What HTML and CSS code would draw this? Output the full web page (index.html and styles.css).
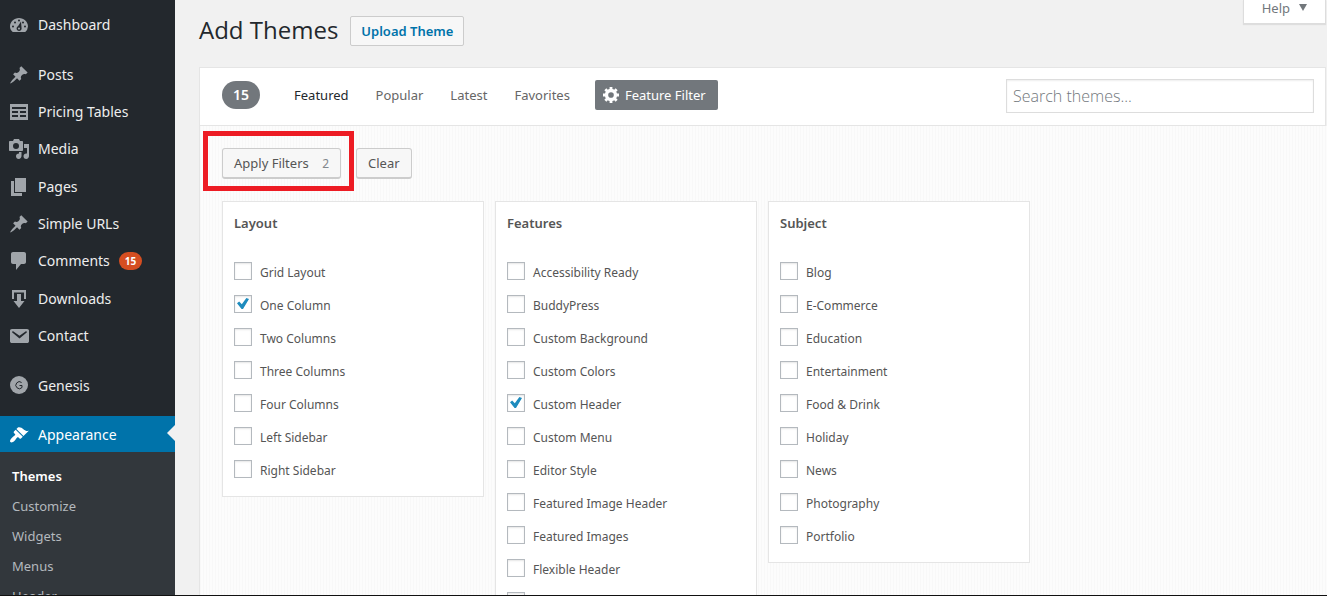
FILE: index.html
```html
<!DOCTYPE html>
<html lang="en">
<head>
<meta charset="utf-8">
<title>Add Themes</title>
<link rel="stylesheet" href="styles.css">
</head>
<body>
<div class="admin">
  <nav class="sidebar" aria-label="Main menu">
    <ul class="menu">
      <li><a class="menu-link" href="#"><svg class="icon" viewBox="0 0 20 20"><path fill-rule="evenodd" d="M3.76 17h12.48A7.95 7.95 0 0 0 19 11.500c0-4.700-4-8.500-9-8.500s-9 3.800-9 8.500c0 2.100.9 4 2.760 5.500zM9 5.500a1 1 0 1 1 2 0a1 1 0 1 1-2 0zM5 7.500a1 1 0 1 1 2 0a1 1 0 1 1-2 0zM3 11.500a1 1 0 1 1 2 0a1 1 0 1 1-2 0zM15 11.500a1 1 0 1 1 2 0a1 1 0 1 1-2 0zM13 7.500a1 1 0 1 1 2 0a1 1 0 1 1-2 0zM12 6.500l.6 7c0 1.400-1.100 2.500-2.500 2.500s-2.500-1.100-2.500-2.500c0-1 .6-1.800 1.400-2.200zM10 12.600a1 1 0 1 0 .01 0z"/></svg>Dashboard</a></li>
    </ul>
    <ul class="menu menu-main">
      <li><a class="menu-link" href="#"><svg class="icon" viewBox="0 0 20 20"><path d="M10.440 3.020l1.820-1.820 6.360 6.350-1.830 1.820c-1.050-.68-2.480-.57-3.410.36l-.75.75c-.92.93-1.040 2.350-.35 3.410l-1.830 1.820-2.410-2.410-2.800 2.790c-.42.42-3.380 2.710-3.800 2.290s1.860-3.390 2.280-3.810l2.790-2.790L4.100 9.360l1.830-1.820c1.050.69 2.480.57 3.400-.36l.75-.75c.93-.92 1.050-2.350.36-3.410z"/></svg>Posts</a></li>
      <li><a class="menu-link" href="#"><svg class="icon" viewBox="0 0 20 20"><path fill-rule="evenodd" d="M1 2h18v16H1zM3 5v2h14V5zM3 9v2h6V9zM11 9v2h6V9zM3 13v2h6v-2zM11 13v2h6v-2z"/></svg>Pricing Tables</a></li>
      <li><a class="menu-link" href="#"><svg class="icon" viewBox="0 0 20 20"><path fill-rule="evenodd" d="M14 10V3c0-.55-.45-1-1-1h-2l-1-2H5L4 2H1c-.55 0-1 .45-1 1v8c0 .55.45 1 1 1h12c.55 0 1-.45 1-1zM7 4a3 3 0 1 1 0 6a3 3 0 1 1 0-6zM15 5h5v12c0 1.500-1.100 3-2.800 3S14.500 18.800 14.500 17.200s1.200-2.700 2.700-2.700l.8.100V9h-3zM10 14.500V13h2.500v4c0 1.500-1.200 3-2.800 3S7 18.800 7 17.200s1.200-2.700 3-2.700z"/></svg>Media</a></li>
      <li><a class="menu-link" href="#"><svg class="icon" viewBox="0 0 20 20"><path d="M6 15V1h11v14zM5 16h8v3H2V4h3z"/></svg>Pages</a></li>
      <li><a class="menu-link" href="#"><svg class="icon" viewBox="0 0 20 20"><path d="M10.440 3.020l1.820-1.820 6.360 6.350-1.830 1.820c-1.050-.68-2.480-.57-3.410.36l-.75.75c-.92.93-1.040 2.350-.35 3.410l-1.830 1.820-2.410-2.410-2.800 2.790c-.42.42-3.380 2.710-3.800 2.290s1.860-3.390 2.280-3.810l2.790-2.790L4.100 9.360l1.830-1.820c1.050.69 2.480.57 3.400-.36l.75-.75c.93-.92 1.050-2.350.36-3.410z"/></svg>Simple URLs</a></li>
      <li><a class="menu-link" href="#"><svg class="icon" viewBox="0 0 20 20"><path d="M4 1h11c1.100 0 2 .9 2 2v8c0 1.100-.9 2-2 2h-3l-5 6v-6H4c-1.100 0-2-.9-2-2V3c0-1.100.9-2 2-2z"/></svg>Comments <span class="bubble">15</span></a></li>
      <li><a class="menu-link" href="#"><svg class="icon" viewBox="0 0 20 20"><path d="M15 3.500V10h2V1H3v9h2V3.500zM12 5v7h3.500L10 19l-5.500-7H8V5z"/></svg>Downloads</a></li>
      <li><a class="menu-link" href="#"><svg class="icon" viewBox="0 0 20 20"><path fill-rule="evenodd" d="M3 3h15c1.200 0 2 .7 2 1.800v10.400c0 1.100-.8 1.800-2 1.800H3c-1.200 0-2-.7-2-1.800V4.800C1 3.700 1.800 3 3 3zM10.500 12.500l7.200-6c.7-.7-.2-1.800-1.200-1.100l-6 4.300-6-4.300c-1-.7-1.900.4-1.200 1.100z"/></svg>Contact</a></li>
    </ul>
    <ul class="menu menu-theme">
      <li><a class="menu-link" href="#"><svg class="icon" viewBox="0 0 20 20"><circle cx="10" cy="9" r="9"/><path class="icon-line" d="M12.600 6.500A3.500 3.500 0 1 0 13 11.500V9.500H10.500"/></svg>Genesis</a></li>
    </ul>
    <a class="menu-link current" href="#"><svg class="icon" viewBox="0 0 20 20"><path d="M14.480 11.060L7.410 3.990l1.500-1.500c.5-.56 2.300-.47 3.510.32 1.210.8 1.430 1.280 2.910 2.100 1.180.64 2.450 1.260 4.450.85zm-.71.71L6.700 4.700 4.930 6.470c-.39.39-.39 1.020 0 1.410l1.060 1.060c.39.39.39 1.030 0 1.420-.6.6-1.430 1.110-2.210 1.690-.35.26-.7.53-1.010.84C1.430 14.230.4 16.080 1.400 17.070c.99 1 2.840-.03 4.180-1.360.31-.31.58-.66.85-1.020.57-.78 1.080-1.610 1.690-2.210.39-.39 1.020-.39 1.410 0l1.060 1.060c.39.39 1.020.39 1.410 0z"/></svg>Appearance</a>
    <ul class="submenu">
      <li><a class="active" href="#">Themes</a></li>
      <li><a href="#">Customize</a></li>
      <li><a href="#">Widgets</a></li>
      <li><a href="#">Menus</a></li>
      <li><a href="#">Header</a></li>
    </ul>
  </nav>

  <main class="content">
    <header class="page-head">
      <h1>Add Themes</h1>
      <button class="upload" type="button">Upload Theme</button>
      <button class="help" type="button">Help <svg class="caret" viewBox="0 0 8 7"><path d="M0 0h8L4 7z"/></svg></button>
    </header>

    <section class="browser">
      <div class="filter-bar">
        <span class="count">15</span>
        <div class="tabs">
          <a class="active" href="#">Featured</a>
          <a href="#">Popular</a>
          <a href="#">Latest</a>
          <a href="#">Favorites</a>
        </div>
        <button class="feature" type="button"><svg class="gear" viewBox="1 2 17 17"><path fill-rule="evenodd" d="M18 12h-2.180c-.17.7-.44 1.350-.81 1.930l1.540 1.540-2.100 2.100-1.540-1.540c-.58.36-1.230.63-1.910.79V19H8v-2.180c-.68-.16-1.330-.43-1.910-.79l-1.540 1.540-2.120-2.120 1.540-1.540c-.36-.58-.63-1.230-.79-1.910H1V9.030h2.170c.16-.7.44-1.350.8-1.940L2.430 5.550l2.100-2.100 1.540 1.540c.58-.37 1.240-.64 1.930-.81V2h3v2.180c.68.16 1.330.43 1.910.79l1.540-1.540 2.120 2.120-1.540 1.540c.36.59.64 1.240.8 1.940H18zM9.500 13.500a3 3 0 1 0 0-6a3 3 0 1 0 0 6z"/></svg>Feature Filter</button>
        <input class="search" type="search" placeholder="Search themes..." aria-label="Search themes">
      </div>

      <div class="drawer">
        <div class="actions">
          <span class="highlight"><button class="btn" type="button">Apply Filters <span class="selected">2</span></button></span>
          <button class="btn" type="button">Clear</button>
        </div>
        <div class="groups">
          <fieldset class="group">
            <legend>Layout</legend>
            <label><input type="checkbox">Grid Layout</label>
            <label><input type="checkbox" checked>One Column</label>
            <label><input type="checkbox">Two Columns</label>
            <label><input type="checkbox">Three Columns</label>
            <label><input type="checkbox">Four Columns</label>
            <label><input type="checkbox">Left Sidebar</label>
            <label><input type="checkbox">Right Sidebar</label>
          </fieldset>
          <fieldset class="group">
            <legend>Features</legend>
            <label><input type="checkbox">Accessibility Ready</label>
            <label><input type="checkbox">BuddyPress</label>
            <label><input type="checkbox">Custom Background</label>
            <label><input type="checkbox">Custom Colors</label>
            <label><input type="checkbox" checked>Custom Header</label>
            <label><input type="checkbox">Custom Menu</label>
            <label><input type="checkbox">Editor Style</label>
            <label><input type="checkbox">Featured Image Header</label>
            <label><input type="checkbox">Featured Images</label>
            <label><input type="checkbox">Flexible Header</label>
            <label><input type="checkbox" aria-label="Footer Widgets"></label>
          </fieldset>
          <fieldset class="group">
            <legend>Subject</legend>
            <label><input type="checkbox">Blog</label>
            <label><input type="checkbox">E-Commerce</label>
            <label><input type="checkbox">Education</label>
            <label><input type="checkbox">Entertainment</label>
            <label><input type="checkbox">Food &amp; Drink</label>
            <label><input type="checkbox">Holiday</label>
            <label><input type="checkbox">News</label>
            <label><input type="checkbox">Photography</label>
            <label><input type="checkbox">Portfolio</label>
          </fieldset>
        </div>
      </div>
    </section>
  </main>
</div>
</body>
</html>
```
FILE: styles.css
```css
* { box-sizing: border-box; }

body {
  margin: 0;
  background: #f1f1f1;
  color: #555;
  font: 13px/18px "Noto Sans", "Open Sans", sans-serif;
}

button, input { font: inherit; }
a { text-decoration: none; }
ul { list-style: none; margin: 0; padding: 0; }

.admin {
  display: flex;
  height: 100vh;
  overflow: hidden;
  border-bottom: 1px solid #111;
}

/* Sidebar */
.sidebar {
  flex: 0 0 175px;
  padding-top: 6px;
  background: #23282d;
}

.menu { display: grid; grid-auto-rows: 1fr; }
.menu-main { min-height: 299px; margin-top: 13px; }
.menu-theme { margin: 12px 0; }

.menu-link {
  display: flex;
  align-items: center;
  gap: 9px;
  height: 37px;
  padding-left: 9px;
  color: #eee;
  font-size: 14px;
}

.icon {
  flex: none;
  width: 20px;
  height: 20px;
  fill: #a0a5aa;
}

.icon-line { fill: none; stroke: #23282d; stroke-width: 1; }

.bubble {
  padding: 0 6px;
  border-radius: 9px;
  background: #d54e21;
  color: #fff;
  font-size: 10px;
  font-weight: 700;
}

.current {
  position: relative;
  height: 36px;
  padding-top: 2px;
  background: #0073aa;
  color: #fff;
}

.current .icon { fill: #fff; }

.current::after {
  content: "";
  position: absolute;
  top: 9px;
  right: 0;
  border: 8px solid transparent;
  border-left: 0;
  border-right-color: #f1f1f1;
}

.submenu {
  height: 100%;
  padding-top: 9px;
  background: #32373c;
}

.submenu a {
  display: block;
  padding-left: 12px;
  color: #b4b9be;
  line-height: 30px;
}

.submenu .active { color: #fff; font-weight: 600; }

/* Page header */
.content {
  flex: 1;
  min-width: 0;
  padding-left: 24px;
}

.page-head {
  display: flex;
  align-items: flex-start;
  height: 67px;
  padding-right: 1px;
}

h1 {
  margin: 14px 12px 0 0;
  color: #23282d;
  font: 400 24px/32px "Open Sans", sans-serif;
}

.upload {
  height: 30px;
  margin-top: 16px;
  padding: 0 10px;
  border: 1px solid #ccc;
  border-radius: 2px;
  background: #f7f7f7;
  color: #0073aa;
  font-weight: 600;
}

.help {
  display: flex;
  align-items: center;
  gap: 9px;
  height: 24px;
  margin-left: auto;
  padding: 0 18px 8px;
  border: 1px solid #ddd;
  border-top: 0;
  background: #fff;
  color: #72777c;
  box-shadow: 0 1px 1px rgba(0, 0, 0, 0.08);
}

.caret { width: 8px; height: 7px; fill: #72777c; }

/* Theme browser */
.browser { border-left: 1px solid #e5e5e5; }

.filter-bar {
  display: flex;
  align-items: center;
  height: 59px;
  margin-right: 1px;
  padding: 0 11px 3px 22px;
  border: 1px solid #e5e5e5;
  border-left: 0;
  background: #fff;
}

.count {
  padding: 4px 11px;
  border-radius: 14px;
  background: #72777c;
  color: #fff;
  font-size: 14px;
  font-weight: 600;
  line-height: 20px;
}

.tabs {
  display: flex;
  gap: 27px;
  margin: 0 25px 0 34px;
}

.tabs a { color: #666; }
.tabs .active { color: #23282d; }

.feature {
  display: flex;
  align-items: center;
  gap: 6px;
  height: 30px;
  padding: 0 12px 0 8px;
  border: 0;
  border-radius: 2px;
  background: #72777c;
  color: #fff;
}

.gear { width: 16px; height: 16px; fill: #fff; }

.search {
  width: 308px;
  height: 34px;
  margin: 1px 0 0 auto;
  padding: 1px 6px 0;
  border: 1px solid #ddd;
  background: #fff;
  box-shadow: inset 0 1px 2px rgba(0, 0, 0, 0.07);
  font-family: "Open Sans", sans-serif;
  font-size: 16px;
  font-weight: 300;
}

.search::placeholder { color: #72777c; }

.drawer {
  min-height: 480px;
  padding: 22px 24px 0 22px;
  background: repeating-linear-gradient(90deg, #f8f8f8 0 1px, #fcfcfc 1px 3px);
}

.actions {
  display: flex;
  gap: 15px;
  margin-bottom: 22px;
}

.btn {
  height: 31px;
  padding: 0 11px;
  border: 1px solid #ccc;
  border-bottom-width: 2px;
  border-radius: 3px;
  background: #f7f7f7;
  color: #555;
}

.selected { margin-left: 10px; color: #82878c; font-size: 12px; }

.highlight { position: relative; display: flex; }

.highlight::after {
  content: "";
  position: absolute;
  inset: -17px -13px -12px -19px;
  border: 5px solid #ed1c24;
  pointer-events: none;
}

.groups {
  display: grid;
  grid-template-columns: repeat(4, 1fr);
  align-items: start;
  gap: 11px;
}

.group {
  min-width: 0;
  margin: 0;
  padding: 12px 11px 10px;
  border: 1px solid #e5e5e5;
  background: #fff;
}

.group legend {
  float: left;
  width: 100%;
  margin-bottom: 23px;
  padding: 0;
  font-weight: 600;
}

.group label {
  display: flex;
  clear: both;
  align-items: center;
  gap: 8px;
  height: 33px;
  padding-top: 2px;
  font-size: 12px;
}

.group input {
  display: grid;
  place-items: center;
  width: 18px;
  height: 18px;
  margin: 0 0 4px;
  border: 1px solid #b4b9be;
  appearance: none;
  background: #fff;
  box-shadow: inset 0 1px 2px rgba(0, 0, 0, 0.1);
}

.group input:checked::before {
  content: "";
  width: 12px;
  height: 11px;
  background: #1e8cbe;
  clip-path: polygon(0 48%, 18% 32%, 40% 57%, 78% 0, 100% 9%, 50% 100%, 38% 100%);
}
```
